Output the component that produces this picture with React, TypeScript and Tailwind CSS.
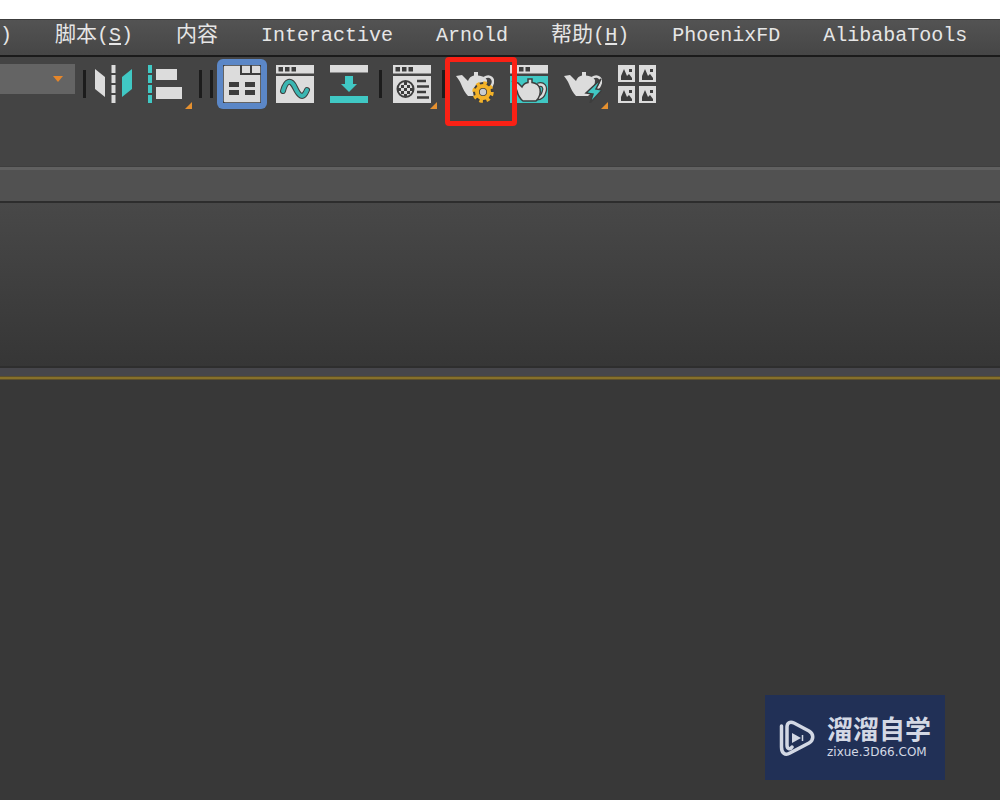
import type { ReactNode } from 'react'
import { clsx } from 'clsx'

interface MenuEntry {
    label: string
    hotkey?: string
    cjk?: boolean
}

const MENUS: MenuEntry[] = [
    { label: '脚本', hotkey: 'S', cjk: true },
    { label: '内容', cjk: true },
    { label: 'Interactive' },
    { label: 'Arnold' },
    { label: '帮助', hotkey: 'H', cjk: true },
    { label: 'PhoenixFD' },
    { label: 'AlibabaTools' },
]

const LIGHT = '#dcdcdc'
const DARK = '#3d3d3d'
const TEAL = '#40c8c4'

function MenuBar() {
    return (
        <nav className="flex h-9 items-center gap-[43px] overflow-hidden border-t border-[#3c3c3c] bg-linear-to-b from-[#535353] to-[#464646] pb-1 font-['Liberation_Mono','Noto_Sans_CJK_SC',monospace] text-[20px] leading-6 whitespace-nowrap text-[#e6e6e6]">
            <span>)</span>
            {MENUS.map((menu) => (
                <button key={menu.label} type="button" className="flex shrink-0 items-center">
                    <span className={clsx(menu.cjk && 'text-[21px]')}>{menu.label}</span>
                    {menu.hotkey && (
                        <span>
                            (<u className="underline-offset-2">{menu.hotkey}</u>)
                        </span>
                    )}
                </button>
            ))}
        </nav>
    )
}

function Separator() {
    return <span className="block h-7 w-[3px] shrink-0 bg-[#1c1c1c]" />
}

interface ToolProps {
    title: string
    active?: boolean
    flyout?: boolean
    children: ReactNode
}

function Tool({ title, active, flyout, children }: ToolProps) {
    return (
        <button
            type="button"
            aria-label={title}
            className={clsx(
                'relative flex shrink-0 items-center justify-center',
                active ? '-mr-[7px] size-[50px] rounded-md bg-[#5b87c7]' : 'size-[38px]'
            )}
        >
            <svg viewBox="0 0 38 38" className="size-[38px]">
                {children}
            </svg>
            {flyout && (
                <svg viewBox="0 0 7 7" className="absolute -right-[6px] -bottom-[6px] size-[7px]">
                    <path d="M7 0V7H0Z" fill="#e5902f" />
                </svg>
            )}
        </button>
    )
}

function WindowTop() {
    return (
        <>
            <path d="M0 0H38V8.5H0Z" fill={LIGHT} />
            <path d="M2.500 2H7V6.500H2.500ZM9 2H13.500V6.500H9ZM15.500 2H20V6.500H15.500Z" fill={DARK} />
        </>
    )
}

function Teapot() {
    return (
        <>
            <path d="M28 13C34 9 39 14 36 20C35 23 32 25 29 27" fill="none" stroke={LIGHT} strokeWidth="2.500" />
            <path
                d="M0 11L6 10L12 16C13 13 15 11 18 10.500V7H22V10.500C26 11 29 12 31 15C31 22 28 28 24 31H12C9 28 7 24 5 19C4 16 2 14 0 11Z"
                fill={LIGHT}
            />
        </>
    )
}

function Thumb({ x, y }: { x: number; y: number }) {
    return (
        <g transform={`translate(${x} ${y})`}>
            <path d="M0 0H17V17H0Z" fill={LIGHT} />
            <path d="M3 15V11L6 4L9 11L11 9L14 13V15Z M11 4H14V7H11Z" fill={DARK} />
        </g>
    )
}

function Toolbar() {
    return (
        <div className="flex h-[110px] items-start overflow-hidden border-b border-[#3e3e3e] bg-[#444444] pt-[3px]">
            <div role="toolbar" className="flex h-12 items-center">
                <button
                    type="button"
                    aria-label="选择集"
                    className="mt-1 flex h-[30px] w-[75px] shrink-0 items-center justify-end self-start bg-[#646464] pr-3"
                >
                    <svg viewBox="0 0 10 8" className="h-2 w-[10px]">
                        <path d="M0 1H10L5 7Z" fill="#e5862a" />
                    </svg>
                </button>
                <div className="mx-2">
                    <Separator />
                </div>

                <div className="flex items-center gap-4">
                    <Tool title="镜像">
                        <path d="M1 4L11 12V32L1 24Z" fill={LIGHT} />
                        <path d="M19.500 0V38" stroke={LIGHT} strokeWidth="4" strokeDasharray="8 2" />
                        <path d="M38 4L28 12V32L38 24Z" fill={TEAL} />
                    </Tool>
                    <Tool title="对齐" flyout>
                        <path d="M2 0V38" stroke={TEAL} strokeWidth="4" strokeDasharray="8 2" />
                        <path d="M8 4H29V15H8ZM8 22H34V34H8Z" fill={LIGHT} />
                    </Tool>
                </div>

                <div className="mr-1 ml-[13px] flex gap-2">
                    <Separator />
                    <Separator />
                </div>

                <div className="flex items-center gap-4">
                    <Tool title="功能区" active>
                        <path
                            d="M0 2Q0 0 2 0H36Q38 0 38 2V38H2Q0 38 0 36Z"
                            fill={LIGHT}
                            stroke={DARK}
                            strokeWidth="1.500"
                        />
                        <path d="M18 0V9H38M28 0V9" fill="none" stroke={DARK} strokeWidth="2" />
                        <path d="M6 17H16V22H6ZM22 17H32V22H22ZM6 25H16V30H6ZM22 25H32V30H22Z" fill={DARK} />
                    </Tool>
                    <Tool title="曲线编辑器">
                        <WindowTop />
                        <path d="M0 11H38V38H0Z" fill={LIGHT} />
                        <path
                            d="M7 26C10 15 15 14 19 22.500S27 35 31 25"
                            fill="none"
                            stroke={DARK}
                            strokeWidth="6"
                            strokeLinecap="round"
                        />
                        <path
                            d="M7 26C10 15 15 14 19 22.500S27 35 31 25"
                            fill="none"
                            stroke="#3bb6b2"
                            strokeWidth="4"
                            strokeLinecap="round"
                        />
                    </Tool>
                    <Tool title="图解视图">
                        <path d="M0 0H38V7.500H0Z" fill={LIGHT} />
                        <path d="M15 11H23V19H27L19 27L11 19H15ZM0 31H38V38H0Z" fill={TEAL} />
                    </Tool>
                </div>

                <div className="mx-[11px]">
                    <Separator />
                </div>

                <Tool title="材质编辑器" flyout>
                    <WindowTop />
                    <path d="M0 11H38V38H0Z" fill={LIGHT} />
                    <circle cx="12.500" cy="24" r="8" fill="none" stroke={DARK} strokeWidth="2" />
                    <path
                        d="M8 20H11V23H8ZM14 20H17V23H14ZM11 23H14V26H11ZM8 26H11V29H8ZM14 26H17V29H14ZM11 17H14V20H11ZM11 29H14V31H11ZM5 23H8V26H5ZM17 23H20V26H17Z"
                        fill={DARK}
                    />
                    <path
                        d="M24 16H33M24 21.500H36M24 27H33M24 32.500H36"
                        stroke={DARK}
                        strokeWidth="2.500"
                    />
                </Tool>

                <div className="mx-[11px]">
                    <Separator />
                </div>

                <div className="flex items-center gap-4">
                    <div className="relative">
                        <Tool title="渲染设置">
                            <Teapot />
                            <circle cx="27" cy="27" r="10" fill={DARK} />
                            <circle
                                cx="27"
                                cy="27"
                                r="9"
                                fill="none"
                                stroke="#f3b229"
                                strokeWidth="3.500"
                                strokeDasharray="3.534 3.534"
                            />
                            <circle cx="27" cy="27" r="6" fill={DARK} stroke="#f3b229" strokeWidth="4" />
                            <circle cx="27" cy="27" r="3.200" fill="#c9cccf" />
                        </Tool>
                        {/* highlight frame drawn over the render setup tool */}
                        <div className="pointer-events-none absolute -top-2 -left-[11px] z-10 h-[69px] w-[72px] rounded-sm border-[5px] border-[#fa2115]" />
                    </div>
                    <Tool title="渲染帧窗口">
                        <WindowTop />
                        <path d="M0 11H38V38H0Z" fill={TEAL} />
                        <g stroke={DARK} strokeWidth="1.500">
                            <path
                                d="M28 20C33 18 36 22 34 27C33 31 30 33 27 33"
                                fill="none"
                                stroke={DARK}
                                strokeWidth="5"
                            />
                            <path
                                d="M28 20C33 18 36 22 34 27C33 31 30 33 27 33"
                                fill="none"
                                stroke={LIGHT}
                                strokeWidth="2.500"
                            />
                            <path
                                d="M3 17L8 18L12 22C13 20 15 18 18 17.500V14H22V17.500C26 18 29 20 30 24C31 29 29 33 26 36H13C9 33 8 30 7 26C6 23 5 20 3 17Z"
                                fill={LIGHT}
                            />
                        </g>
                    </Tool>
                    <Tool title="渲染产品" flyout>
                        <Teapot />
                        <path
                            d="M37 14L22 28L29 29L26 38L38 25L32 24Z"
                            fill={TEAL}
                            stroke={DARK}
                            strokeWidth="1.500"
                        />
                    </Tool>
                    <Tool title="渲染库">
                        <Thumb x={0} y={0} />
                        <Thumb x={21} y={0} />
                        <Thumb x={0} y={21} />
                        <Thumb x={21} y={21} />
                    </Tool>
                </div>
            </div>
        </div>
    )
}

function Watermark() {
    return (
        <div className="absolute right-[55px] bottom-5 flex h-[85px] w-[180px] items-center gap-3 bg-[#213056] pl-[14px] text-[#d3d8e4]">
            <svg viewBox="0 0 36 36" className="size-9 shrink-0" fill="none" stroke="currentColor">
                <path
                    d="M2.500 6V27C2.500 33 6 36 11 33L30 23C35 20 35 14 30 11L15 3C11 1 8 3 8 7V25C8 29 11 30 13 27"
                    strokeWidth="3.500"
                    strokeLinecap="round"
                />
                <path d="M13 13L22 18L13 23Z" fill="currentColor" stroke="none" />
                <path d="M23.500 15V21" strokeWidth="1.500" />
            </svg>
            <div className="pb-1 whitespace-nowrap">
                <p className="mb-1 font-['Noto_Sans_CJK_SC',sans-serif] text-[26px] leading-7 font-bold">溜溜自学</p>
                <p className="font-['DejaVu_Sans',sans-serif] text-[12px] leading-3">zixue.3D66.COM</p>
            </div>
        </div>
    )
}

export default function App() {
    return (
        <div className="relative flex min-h-screen flex-col bg-[#383838]">
            <div className="h-[19px] bg-white" />
            <MenuBar />
            <div className="h-0.5 bg-[#1b1b1b]" />
            <Toolbar />
            <div className="h-9 border-t-[3px] border-b-2 border-t-[#606060] border-b-[#2d2d2d] bg-[#515151]" />
            <div className="h-[165px] border-b-2 border-[#2e2e2e] bg-linear-to-b from-[#484848] to-[#363636]" />
            <div className="h-2 bg-[#46464b]" />
            <div className="h-1 border-y border-[#5c4f2b] bg-[#86702b]" />
            <main className="flex-1" />
            <Watermark />
        </div>
    )
}
